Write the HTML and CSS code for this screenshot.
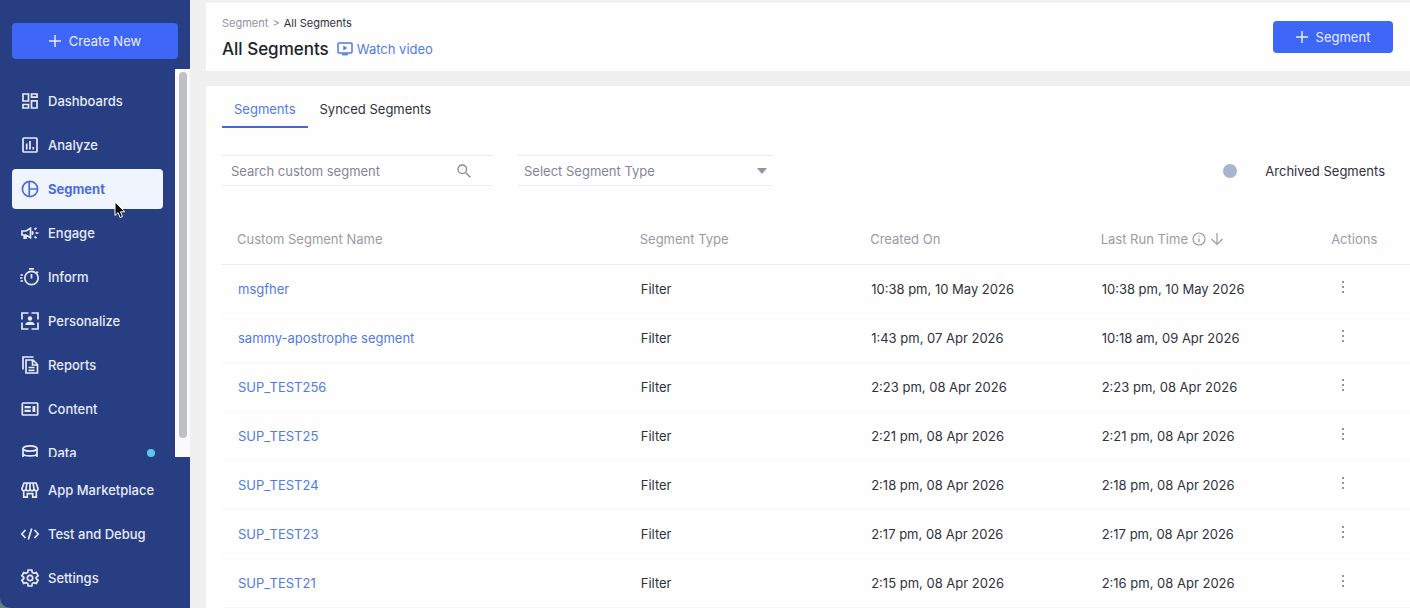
FILE: index.html
```html
<!DOCTYPE html>
<html lang="en">
<head>
<meta charset="utf-8">
<title>All Segments</title>
<link rel="stylesheet" href="styles.css">
</head>
<body>
<div class="app">
  <aside class="sidebar">
    <div class="sidebar-top">
      <button class="btn btn-create" type="button"><svg class="plus" viewBox="0 0 12 12"><path d="M6 0v12M0 6h12"/></svg>Create New</button>
    </div>
    <div class="nav-scroll">
      <nav class="nav" aria-label="Main">
        <a class="nav-item" href="#"><svg class="icon" viewBox="0 0 20 20"><path d="M3 3h5.500v7h-5.500zM11.500 3h5.500v3.200h-5.500zM11.500 9.800h5.500v7.200h-5.500zM3 13.500h5.500v3.500h-5.500z"/></svg>Dashboards</a>
        <a class="nav-item" href="#"><svg class="icon" viewBox="0 0 20 20"><rect x="3" y="3" width="14" height="14" rx="1"/><path d="M6.700 8.500v6M10 6v8.500M13.300 12v2.500"/></svg>Analyze</a>
        <a class="nav-item active" href="#" aria-current="page"><svg class="icon" viewBox="0 0 20 20"><circle cx="10" cy="10" r="7.600"/><path d="M9.200 2.400v15.200M9.200 10h8.400"/></svg>Segment
          <svg class="cursor" viewBox="0 0 12 18"><path d="M1 1v13.500l3.100-2.900 2 4.900 2.400-1-2-4.700h4.300z"/></svg></a>
        <a class="nav-item" href="#"><svg class="icon" viewBox="0 0 20 20"><path d="M2 8h4l4.500-2.700v9.400L6 12H2zM4.200 12v3.200h1.800V12M12.200 8.300q1.200 1.700 0 3.400M14.500 6.500l2-1.700M15.500 10h3M14.500 13.500l2 1.700"/></svg>Engage</a>
        <a class="nav-item" href="#"><svg class="icon" viewBox="0 0 20 20"><circle cx="11.500" cy="11" r="6.700"/><path d="M9 1.800h5M11.500 7v4.500M16.500 4.500l1.500 1.500M.500 8h2.500M0 11h2.500M.500 14h2.500"/></svg>Inform</a>
        <a class="nav-item" href="#"><svg class="icon" viewBox="0 0 20 20"><path d="M8.500 2H2v6.500M11.500 2H18v6.500M18 11.500V18h-6.500M8.500 18H2v-6.500"/><path class="solid" d="M5.500 14v-1c0-1.500 3-2.300 4.500-2.300s4.500.8 4.500 2.300v1z"/><circle class="solid" cx="10" cy="7.500" r="2.200"/></svg>Personalize</a>
        <a class="nav-item" href="#"><svg class="icon" viewBox="0 0 20 20"><path d="M3 14.500V2h10.500M6 5h7l4.500 4.500V18H6zM12.500 5.500v4.500h4.500M8.500 12.500h6M8.500 15.300h6"/></svg>Reports</a>
        <a class="nav-item" href="#"><svg class="icon" viewBox="0 0 20 20"><rect x="2.300" y="4" width="15.400" height="12" rx=".8"/><path class="solid" d="M4.500 7h6.200v2.200H4.500zM4.500 10.800h6.200V13H4.500zM12.500 7h2.800v6h-2.800z"/></svg>Content</a>
        <a class="nav-item" href="#"><svg class="icon" viewBox="0 0 20 20"><ellipse cx="10" cy="5.500" rx="7" ry="2.700"/><path d="M3 5.500v9.500c0 1.500 3 2.700 7 2.700s7-1.200 7-2.700V5.500M3 10.200c0 1.500 3 2.700 7 2.700s7-1.200 7-2.700"/></svg>Data<span class="dot"></span></a>
      </nav>
      <div class="track"><div class="thumb"></div></div>
    </div>
    <nav class="nav-bottom" aria-label="Tools">
      <a class="nav-item" href="#"><svg class="icon" viewBox="0 0 20 20"><path d="M4 3h12l2 5.500c0 3-3.700 3-4 0c0 3-4 3-4 0c0 3-4 3-4 0c-.3 3-4 3-4 0zM7 3l-1 5.500M10 3v5.500M13 3l1 5.500M3.700 11v6.200h3.600v-3.600h5.400v3.600h3.600V11"/></svg>App Marketplace</a>
      <a class="nav-item" href="#"><svg class="icon" viewBox="0 0 20 20"><path d="M5.500 6L1.800 10l3.700 4M14.500 6l3.700 4-3.700 4M11.700 4.500L8.300 15.500"/></svg>Test and Debug</a>
      <a class="nav-item" href="#"><svg class="icon" viewBox="0 0 20 20"><path d="M8.200 2h3.600l.5 2.500 1.600.9 2.400-.8 1.800 3.100-1.900 1.600v1.400l1.900 1.600-1.800 3.100-2.400-.8-1.600.9-.5 2.500H8.200l-.5-2.500-1.600-.9-2.400.8-1.800-3.100 1.900-1.600V9.300L1.900 7.700l1.800-3.100 2.400.8 1.600-.9z"/><circle cx="10" cy="10" r="2.700"/></svg>Settings</a>
    </nav>
  </aside>
  <main class="main">
    <header class="header">
      <div>
        <nav class="crumbs" aria-label="Breadcrumb"><a href="#">Segment</a><span>&gt;</span><b>All Segments</b></nav>
        <div class="title-row">
          <h1>All Segments</h1>
          <a class="watch" href="#"><svg class="video" viewBox="0 0 16 14"><rect x="1" y="1" width="14" height="10" rx="1"/><path d="M5 12.600h6"/><path class="solid" d="M6.300 3.500v5l4-2.500z"/></svg>Watch video</a>
        </div>
      </div>
      <button class="btn btn-segment" type="button"><svg class="plus" viewBox="0 0 12 12"><path d="M6 0v12M0 6h12"/></svg>Segment</button>
    </header>
    <section class="panel">
      <div class="tabs" role="tablist">
        <button class="tab selected" type="button" role="tab" aria-selected="true">Segments</button>
        <button class="tab" type="button" role="tab" aria-selected="false">Synced Segments</button>
      </div>
      <div class="filters">
        <div class="field search">
          <input type="text" placeholder="Search custom segment" aria-label="Search custom segment">
          <svg class="glass" viewBox="0 0 14 14"><circle cx="5.300" cy="5.300" r="4.300"/><path d="M8.500 8.500l4.800 4.800"/></svg>
        </div>
        <div class="field type">
          <select aria-label="Select Segment Type"><option>Select Segment Type</option></select>
          <svg class="caret" viewBox="0 0 10 6"><path d="M0 0h10L5 6z"/></svg>
        </div>
        <label class="archived"><input type="checkbox" role="switch">Archived Segments</label>
      </div>
      <table class="segments">
        <colgroup><col class="c-name"><col class="c-mid"><col class="c-mid"><col class="c-mid"><col></colgroup>
        <thead><tr><th>Custom Segment Name</th><th>Segment Type</th><th>Created On</th><th><span class="sort">Last Run Time<svg class="head-icon" viewBox="0 0 14 14"><circle cx="7" cy="7" r="6"/><path d="M7 6.200v4M7 3.600v1.200"/></svg><svg class="head-icon" viewBox="0 0 14 14"><path d="M7 1v11.500M1.500 7L7 12.500 12.500 7"/></svg></span></th><th>Actions</th></tr></thead>
        <tbody>
          <tr><td><a href="#">msgfher</a></td><td>Filter</td><td>10:38 pm, 10 May 2026</td><td>10:38 pm, 10 May 2026</td><td><button class="more" type="button" aria-label="Actions"><i></i><i></i><i></i></button></td></tr>
          <tr><td><a href="#">sammy-apostrophe segment</a></td><td>Filter</td><td>1:43 pm, 07 Apr 2026</td><td>10:18 am, 09 Apr 2026</td><td><button class="more" type="button" aria-label="Actions"><i></i><i></i><i></i></button></td></tr>
          <tr><td><a href="#">SUP_TEST256</a></td><td>Filter</td><td>2:23 pm, 08 Apr 2026</td><td>2:23 pm, 08 Apr 2026</td><td><button class="more" type="button" aria-label="Actions"><i></i><i></i><i></i></button></td></tr>
          <tr><td><a href="#">SUP_TEST25</a></td><td>Filter</td><td>2:21 pm, 08 Apr 2026</td><td>2:21 pm, 08 Apr 2026</td><td><button class="more" type="button" aria-label="Actions"><i></i><i></i><i></i></button></td></tr>
          <tr><td><a href="#">SUP_TEST24</a></td><td>Filter</td><td>2:18 pm, 08 Apr 2026</td><td>2:18 pm, 08 Apr 2026</td><td><button class="more" type="button" aria-label="Actions"><i></i><i></i><i></i></button></td></tr>
          <tr><td><a href="#">SUP_TEST23</a></td><td>Filter</td><td>2:17 pm, 08 Apr 2026</td><td>2:17 pm, 08 Apr 2026</td><td><button class="more" type="button" aria-label="Actions"><i></i><i></i><i></i></button></td></tr>
          <tr><td><a href="#">SUP_TEST21</a></td><td>Filter</td><td>2:15 pm, 08 Apr 2026</td><td>2:16 pm, 08 Apr 2026</td><td><button class="more" type="button" aria-label="Actions"><i></i><i></i><i></i></button></td></tr>
        </tbody>
      </table>
    </section>
  </main>
</div>
</body>
</html>
```

FILE: styles.css
```css
* { box-sizing: border-box; }
body { margin: 0; background: #5d8580; color: #30323c; font: 13px/20px Inter, "Liberation Sans", sans-serif; }
a { color: inherit; text-decoration: none; }
button, input, select { font: inherit; color: inherit; border: 0; background: none; padding: 0; margin: 0; }
svg { flex: none; fill: none; stroke: currentColor; stroke-width: 1.5; }
svg .solid { fill: currentColor; stroke: none; }

.app { display: flex; height: 100vh; overflow: hidden; }

.sidebar { display: flex; flex-direction: column; width: 190px; flex: none; background: #283e82; color: #e6ebfa; border-bottom-left-radius: 10px; }
.sidebar-top { padding: 23px 12px 10px; }
.btn { display: flex; align-items: center; justify-content: center; gap: 8px; border-radius: 4px; background: #3e67f7; color: #e8eeff; cursor: pointer; }
.btn-create { width: 100%; height: 36px; }
.plus { width: 12px; height: 12px; }

.nav-scroll { display: flex; flex: 1; min-height: 0; overflow: hidden; }
.nav { flex: 1; padding: 12px 12px 0; }
.nav-item { position: relative; display: flex; align-items: center; gap: 8px; height: 40px; margin-bottom: 4px; padding: 0 8px; border-radius: 4px; font-weight: 500; white-space: nowrap; }
.nav-item.active { background: #f0f4fd; color: #4a6ee0; font-weight: 700; }
.icon { width: 20px; height: 20px; stroke-width: 1.7; }
.dot { width: 8px; height: 8px; margin-left: auto; border-radius: 50%; background: #5cc8e8; }
.cursor { position: absolute; left: 102px; top: 32px; width: 12px; height: 18px; z-index: 2; fill: #111; stroke: #fff; stroke-width: 1; }
.track { width: 15px; padding: 3px 3px 0 4px; background: #fbfbfd; }
.thumb { height: 95%; border-radius: 4px; background: #bfc0c4; }
.nav-bottom { padding: 13px 12px 6px; }

.main { flex: 1; min-width: 0; display: flex; flex-direction: column; gap: 15px; padding: 2px 0 0 16px; background: #f0f0f1; }
.header { display: flex; justify-content: space-between; align-items: flex-start; flex: none; padding: 10px 17px 8px 16px; border-top: 1px solid #f6f6f8; background: #fefefe; }
.crumbs { display: flex; gap: 4px; color: #92939f; font-size: 11px; line-height: 20px; }
.crumbs b { color: #30323c; font-weight: 400; }
.title-row { display: flex; align-items: center; gap: 8px; margin-top: 2px; }
h1 { margin: 0; font-size: 17px; line-height: 28px; font-weight: 500; color: #20222c; }
.watch { display: flex; align-items: center; gap: 4px; color: #527ae8; }
.video { width: 16px; height: 14px; }
.btn-segment { width: 120px; height: 32px; margin-top: 8px; }

.panel { flex: 1; padding: 9px 0 0 16px; background: #fefefe; }
.tabs { display: flex; }
.tab { height: 33px; padding: 0 12px 4px; border-bottom: 2px solid transparent; cursor: pointer; }
.tab.selected { color: #527ae8; border-bottom-color: #4468d6; }
.filters { display: flex; align-items: center; gap: 24px; margin: 27px 25px 29px 0; color: #85869a; }
.field { display: flex; align-items: center; height: 31px; border-top: 1px solid #eeeef2; border-bottom: 1px solid #eeeef2; }
.search { width: 271px; padding: 0 22px 0 9px; }
.search input { flex: 1; min-width: 0; outline: 0; }
.search input::placeholder { color: #85869a; opacity: 1; }
.glass { width: 14px; height: 14px; stroke-width: 1.3; }
.type { width: 256px; padding: 0 6px 0 7px; }
.type select { flex: 1; min-width: 0; appearance: none; outline: 0; }
.caret { width: 10px; height: 6px; fill: #9495a8; stroke: none; }
.archived { display: flex; align-items: center; gap: 8px; margin-left: auto; color: #30323c; }
.archived input { appearance: none; display: flex; width: 34px; height: 14px; border-radius: 7px; }
.archived input::before { content: ""; width: 14px; height: 14px; border-radius: 50%; background: #a9b4d3; }

.segments { width: 100%; table-layout: fixed; border-collapse: collapse; }
.c-name { width: 33.9%; }
.c-mid { width: 19.4%; }
th { height: 49px; padding: 0 0 0 15px; text-align: left; font-weight: 400; color: #9a9ba8; border-bottom: 1px solid #ebebef; white-space: nowrap; }
td { height: 49px; padding: 0 0 0 16px; border-bottom: 1px solid #f8f8fa; white-space: nowrap; }
td a { color: #527ae8; }
.sort { display: flex; align-items: center; gap: 4px; }
.head-icon { width: 14px; height: 14px; stroke-width: 1.2; }
.more { display: flex; flex-direction: column; align-items: center; gap: 3px; width: 22px; padding: 4px 0 8px; cursor: pointer; }
.more i { width: 2px; height: 2px; background: #92939f; }
```
